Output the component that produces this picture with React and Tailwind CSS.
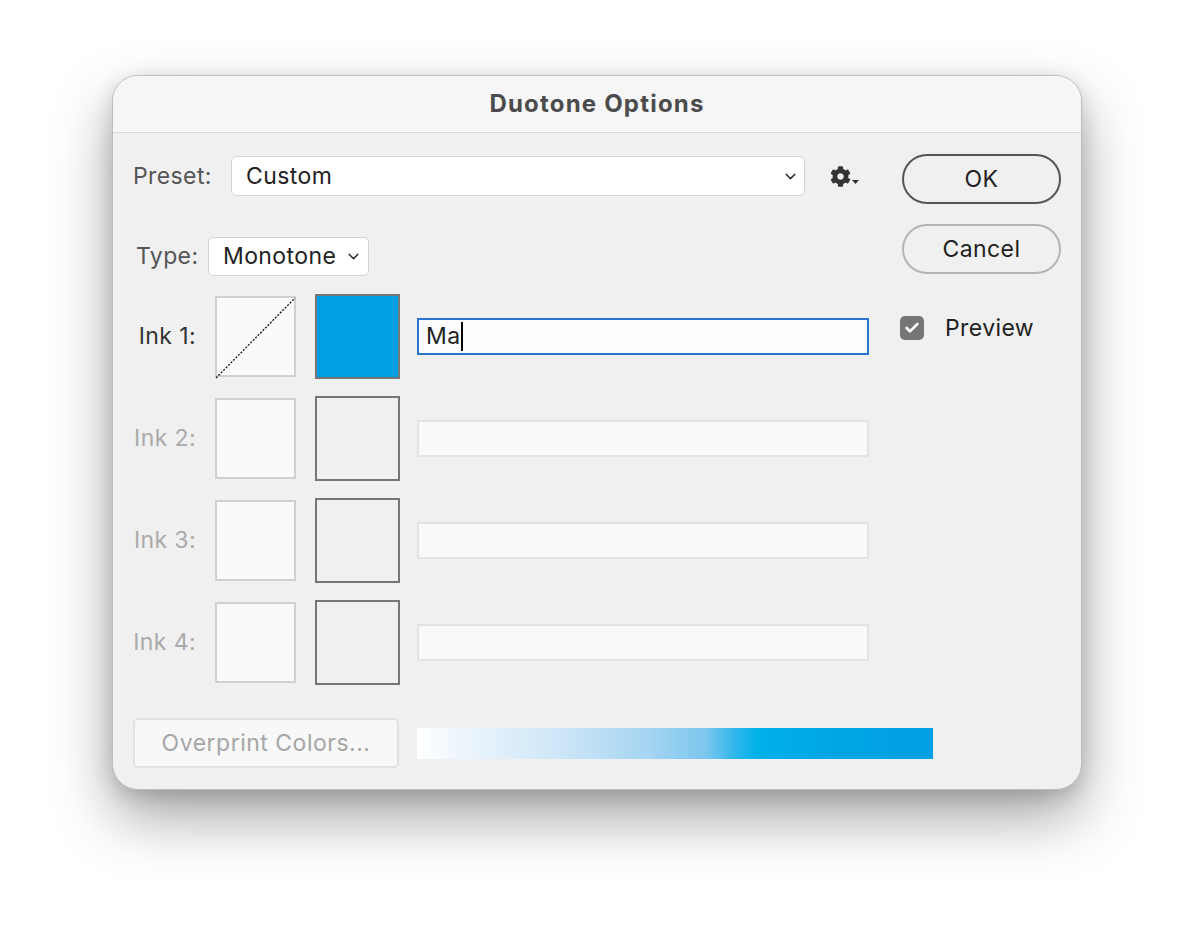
import { ChevronDown, Check } from "lucide-react";
import { FaCog } from "react-icons/fa";

const font = { fontFamily: "Inter, 'Noto Sans', sans-serif" };

function Select({ value, className }) {
  return (
    <div
      className={
        "flex items-center justify-between h-10 rounded-[5px] border border-[#d2d2d2] bg-white pl-[14px] text-[23px] tracking-[0.4px] text-[#222] " +
        className
      }
    >
      <span>{value}</span>
      <ChevronDown size={17} strokeWidth={2} className="text-[#333]" />
    </div>
  );
}

function CurveBox({ active }) {
  return (
    <div className="relative w-[81px] h-[81px] border-2 border-[#d0d0d0] bg-[#fafafa]">
      {active && (
        <svg className="absolute -left-[2px] -top-[2px] overflow-visible" width="81" height="83">
          <line x1="1" y1="82" x2="80" y2="2" stroke="#111" strokeWidth="1.3" strokeDasharray="2 1.5" />
        </svg>
      )}
    </div>
  );
}

function InkRow({ n, active }) {
  return (
    <div className="flex items-center h-[85px]">
      <div
        className={
          "w-[63px] text-right text-[23px] tracking-[0.4px] whitespace-nowrap " +
          (active ? "text-[#333]" : "text-[#aaa]")
        }
      >
        Ink {n}:
      </div>
      <div className="ml-[19px]">
        <CurveBox active={active} />
      </div>
      <div
        className={
          "ml-[19px] w-[85px] h-[85px] border-2 border-[#767676] " +
          (active ? "bg-[#009fe3]" : "bg-[#f0f0f0]")
        }
      />
      {active ? (
        <div className="ml-[17px] w-[452px] h-[37px] border-2 border-[#2a74d0] bg-[#fdfdfd] flex items-center pl-[7px] text-[23px] tracking-[0.4px] text-[#222]">
          <span>Ma</span>
          <span className="inline-block w-[2px] h-[29px] bg-black" />
        </div>
      ) : (
        <div className="ml-[17px] w-[452px] h-[37px] border-2 border-[#e3e3e3] bg-[#f9f9f9]" />
      )}
    </div>
  );
}

export default function App() {
  return (
    <div className="w-full h-[938px] bg-white pt-[75px] pl-[112px]" style={font}>
      <div className="w-[970px] h-[715px] rounded-[26px] bg-[#f0f0f0] overflow-hidden border border-[#bdbdbd] shadow-[0_28px_60px_rgba(0,0,0,0.35),0_6px_20px_rgba(0,0,0,0.15)]">
        <div className="h-[57px] bg-[#f6f6f7] border-b border-[#d6d6d6] flex items-center justify-center text-[24px] tracking-[1.2px] font-bold text-[#4b4b4b]">
          Duotone Options
        </div>
        <div className="flex px-[20px]">
          <div className="w-[769px]">
            <div className="flex items-center mt-[23px] h-10">
              <span className="w-[98px] text-[23px] tracking-[0.4px] text-[#555]">Preset:</span>
              <Select value="Custom" className="w-[574px] pr-[5px]" />
              <div className="ml-[25px] flex items-end text-[#333]">
                <FaCog size={21} />
                <svg width="7" height="5" className="mb-[2px] ml-[1px]">
                  <path d="M0 0 L7 0 L3.5 4 Z" fill="#333" />
                </svg>
              </div>
            </div>
            <div className="flex items-center mt-[41px] h-[39px]">
              <span className="w-[75px] pl-[3px] text-[23px] tracking-[0.4px] text-[#555]">Type:</span>
              <Select value="Monotone" className="w-[161px] h-[39px] pl-[14px] pr-[6px]" />
            </div>
            <div className="mt-[18px] flex flex-col gap-[17px]">
              <InkRow n={1} active />
              <InkRow n={2} />
              <InkRow n={3} />
              <InkRow n={4} />
            </div>
          </div>
          <div className="w-[159px] ml-auto flex flex-col">
            <div className="mt-[21px] h-[50px] rounded-full border-2 border-[#555] flex items-center justify-center text-[23px] tracking-[0.4px] text-[#222]">
              OK
            </div>
            <div className="mt-[20px] h-[50px] rounded-full border-2 border-[#b4b4b4] flex items-center justify-center text-[23px] tracking-[0.4px] text-[#222]">
              Cancel
            </div>
            <div className="mt-[37px] -ml-[2px] flex items-center">
              <div className="w-[24px] h-[24px] rounded-[5px] bg-[#767676] flex items-center justify-center">
                <Check size={16} strokeWidth={4} className="text-white" />
              </div>
              <span className="ml-[21px] text-[23px] tracking-[0.4px] text-[#222]">Preview</span>
            </div>
          </div>
        </div>
        <div className="flex items-center mt-[33px] px-[20px]">
          <div className="w-[266px] h-[50px] rounded-[5px] border-2 border-[#e2e2e2] bg-[#f8f8f8] flex items-center justify-center text-[23px] tracking-[0.5px] text-[#a6a6a6]">
            Overprint Colors...
          </div>
          <div className="ml-[18px] w-[516px] h-[31px] bg-[linear-gradient(to_right,#ffffff_0%,#eef6fc_8%,#cde6f7_28%,#a5d5f2_45%,#7cc6ee_56%,#2bb6ea_62%,#00b1e8_66%,#00a5e3_80%,#009fe2_100%)]" />
        </div>
      </div>
    </div>
  );
}
